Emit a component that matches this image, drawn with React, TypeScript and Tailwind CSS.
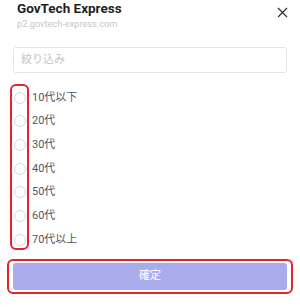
const ages = ["10代以下", "20代", "30代", "40代", "50代", "60代", "70代以上"];

export default function App() {
  return (
    <div className="h-[308px] w-[300px] overflow-hidden bg-white font-['Roboto','Noto_Sans_CJK_JP',sans-serif]">
      {/* header */}
      <div className="flex items-start justify-between pl-[17px] pr-[12px]">
        <div>
          <div className="text-[13.5px] font-bold leading-[16px] text-[#1f1f1f]">GovTech Express</div>
          <div className="mt-[2px] text-[9.2px] leading-[11px] text-[#c6c6c6]">p2.govtech-express.com</div>
        </div>
        <svg className="mt-[7px]" width="11" height="11" viewBox="0 0 11 11" fill="none">
          <path d="M1 1 L10 10 M10 1 L1 10" stroke="#333" strokeWidth="1.3" />
        </svg>
      </div>

      {/* filter */}
      <div className="mx-[13px] mt-[18px] flex h-[26px] items-center rounded-[3px] border border-[#e3e4e8] px-[7px] text-[11px] text-[#c3c4cc]">
        絞り込み
      </div>

      {/* options */}
      <div className="ml-[10px] mt-[11px] flex items-start">
        <div className="flex h-[166px] flex-col rounded-[6px] border-2 border-[#e8222d] pl-[2px] pr-[1px]">
          {ages.map((a) => (
            <div key={a} className="flex h-[23.67px] shrink-0 items-center">
              <span className="h-[12px] w-[12px] rounded-full border border-[#d6d7dc]" />
            </div>
          ))}
        </div>
        <div className="ml-[3px] mt-[2px] flex h-[164px] flex-col">
          {ages.map((a) => (
            <div key={a} className="flex h-[23.67px] shrink-0 items-center text-[11px] text-[#535664]">
              {a}
            </div>
          ))}
        </div>
      </div>

      {/* confirm */}
      <div className="mx-[7px] mt-[9px] rounded-[6px] border-2 border-[#e8222d] px-[4px] py-[2px]">
        <button className="flex h-[27px] w-full items-center justify-center rounded-[3px] bg-[#abaaea] text-[11px] text-white">
          確定
        </button>
      </div>
    </div>
  );
}
